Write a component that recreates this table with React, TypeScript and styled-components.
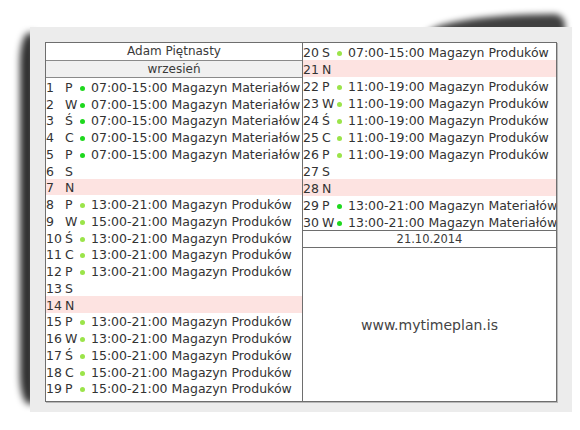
import React from "react";
import styled, { createGlobalStyle } from "styled-components";

const Global = createGlobalStyle`
  html, body { margin: 0; padding: 0; background: #ffffff; }
  body { font-family: "DejaVu Sans", Verdana, sans-serif; color: #333; }
`;

const Page = styled.div`
  padding: 27px 0 0 30px;
`;

const Frame = styled.div`
  position: relative;
  isolation: isolate;
  width: 542px;
  &::before {
    content: "";
    position: absolute;
    left: -10px;
    top: 6px;
    bottom: 8px;
    width: 15px;
    background: rgba(0, 0, 0, 0.82);
    border-radius: 60% 0 0 60% / 8% 0 0 8%;
    filter: blur(3.5px);
    z-index: -1;
  }
  &::after {
    content: "";
    position: absolute;
    right: 7px;
    top: -13px;
    width: 140px;
    height: 24px;
    background: rgba(0, 0, 0, 0.75);
    border-top-left-radius: 100% 100%;
    border-top-right-radius: 12px 12px;
    filter: blur(3px);
    z-index: -1;
  }
`;

const Card = styled.div`
  position: relative;
  box-sizing: border-box;
  width: 542px;
  height: 385px;
  padding: 15px 15px 10px 15px;
  background: #ececec;
  &::after {
    content: "";
    position: absolute;
    right: 12px;
    bottom: -5px;
    width: 200px;
    height: 9px;
    background: rgba(0, 0, 0, 0.22);
    border-radius: 50%;
    filter: blur(3px);
    z-index: -1;
  }
`;

const Table = styled.div`
  box-sizing: border-box;
  height: 360px;
  border: 1px solid #6e6e6e;
  box-shadow: 1px 1px 0 #b8b8b8;
  background: #fff;
  display: grid;
  grid-template-columns: 257px 1fr;
`;

const Column = styled.div<{ $divider?: boolean }>`
  display: flex;
  flex-direction: column;
  min-width: 0;
  overflow: hidden;
  ${(p) => (p.$divider ? "border-right: 1px solid #6e6e6e;" : "")}
`;

const Caption = styled.div<{ $shade?: boolean }>`
  height: 17px;
  line-height: 17px;
  text-align: center;
  font-size: 12px;
  color: #3a3a3a;
  border-bottom: 1px solid #8a8a8a;
  background: ${(p) => (p.$shade ? "#f0f0f0" : "#fff")};
  &:nth-child(2) {
    height: 16px;
    line-height: 16px;
  }
`;

const Row = styled.div<{ $h: number; $free?: boolean }>`
  box-sizing: border-box;
  display: flex;
  align-items: center;
  height: ${(p) => p.$h}px;
  padding-top: 2px;
  font-size: 12.5px;
  white-space: nowrap;
  color: #333;
  background: ${(p) => (p.$free ? "#fde3e1" : "transparent")};
`;

const Num = styled.span`
  flex: 0 0 19px;
`;

const Day = styled.span`
  flex: 0 0 14px;
`;

const DotCell = styled.span`
  flex: 0 0 12px;
  display: flex;
  align-items: center;
`;

const Dot = styled.span<{ $kind: "m" | "p" }>`
  width: 5px;
  height: 5px;
  margin-left: 1px;
  margin-top: 2px;
  border-radius: 50%;
  background: ${(p) => (p.$kind === "m" ? "#1ed81e" : "#9be44a")};
`;

const Shift = styled.span``;

const DateRow = styled.div`
  height: 16px;
  line-height: 16px;
  text-align: center;
  font-size: 11.5px;
  color: #3a3a3a;
  border-top: 1px solid #6e6e6e;
  border-bottom: 1px solid #6e6e6e;
`;

const Site = styled.div`
  flex: 1;
  display: flex;
  align-items: center;
  justify-content: center;
  font-size: 14px;
  color: #444;
`;

type Entry = [number, string, ("m" | "p" | null), string];

const M = "Magazyn Materiałów";
const P = "Magazyn Produków";

const left: Entry[] = [
  [1, "P", "m", `07:00-15:00 ${M}`],
  [2, "W", "m", `07:00-15:00 ${M}`],
  [3, "Ś", "m", `07:00-15:00 ${M}`],
  [4, "C", "m", `07:00-15:00 ${M}`],
  [5, "P", "m", `07:00-15:00 ${M}`],
  [6, "S", null, ""],
  [7, "N", null, ""],
  [8, "P", "p", `13:00-21:00 ${P}`],
  [9, "W", "p", `15:00-21:00 ${P}`],
  [10, "Ś", "p", `13:00-21:00 ${P}`],
  [11, "C", "p", `13:00-21:00 ${P}`],
  [12, "P", "p", `13:00-21:00 ${P}`],
  [13, "S", null, ""],
  [14, "N", null, ""],
  [15, "P", "p", `13:00-21:00 ${P}`],
  [16, "W", "p", `13:00-21:00 ${P}`],
  [17, "Ś", "p", `15:00-21:00 ${P}`],
  [18, "C", "p", `15:00-21:00 ${P}`],
  [19, "P", "p", `15:00-21:00 ${P}`],
];

const right: Entry[] = [
  [20, "S", "p", `07:00-15:00 ${P}`],
  [21, "N", null, ""],
  [22, "P", "p", `11:00-19:00 ${P}`],
  [23, "W", "p", `11:00-19:00 ${P}`],
  [24, "Ś", "p", `11:00-19:00 ${P}`],
  [25, "C", "p", `11:00-19:00 ${P}`],
  [26, "P", "p", `11:00-19:00 ${P}`],
  [27, "S", null, ""],
  [28, "N", null, ""],
  [29, "P", "m", `13:00-21:00 ${M}`],
  [30, "W", "m", `13:00-21:00 ${M}`],
];

const DayRow = ({ e, h }: { e: Entry; h: number }) => (
  <Row $h={h} $free={e[1] === "N"}>
    <Num>{e[0]}</Num>
    <Day>{e[1]}</Day>
    {e[2] && (
      <>
        <DotCell>
          <Dot $kind={e[2]} />
        </DotCell>
        <Shift>{e[3]}</Shift>
      </>
    )}
  </Row>
);

export default function App() {
  return (
    <Page>
      <Global />
      <Frame>
        <Card>
          <Table>
            <Column $divider>
              <Caption>Adam Piętnasty</Caption>
              <Caption $shade>wrzesień</Caption>
              {left.map((e) => (
                <DayRow key={e[0]} e={e} h={16.75} />
              ))}
            </Column>
            <Column>
              {right.map((e) => (
                <DayRow key={e[0]} e={e} h={17} />
              ))}
              <DateRow>21.10.2014</DateRow>
              <Site>www.mytimeplan.is</Site>
            </Column>
          </Table>
        </Card>
      </Frame>
    </Page>
  );
}
